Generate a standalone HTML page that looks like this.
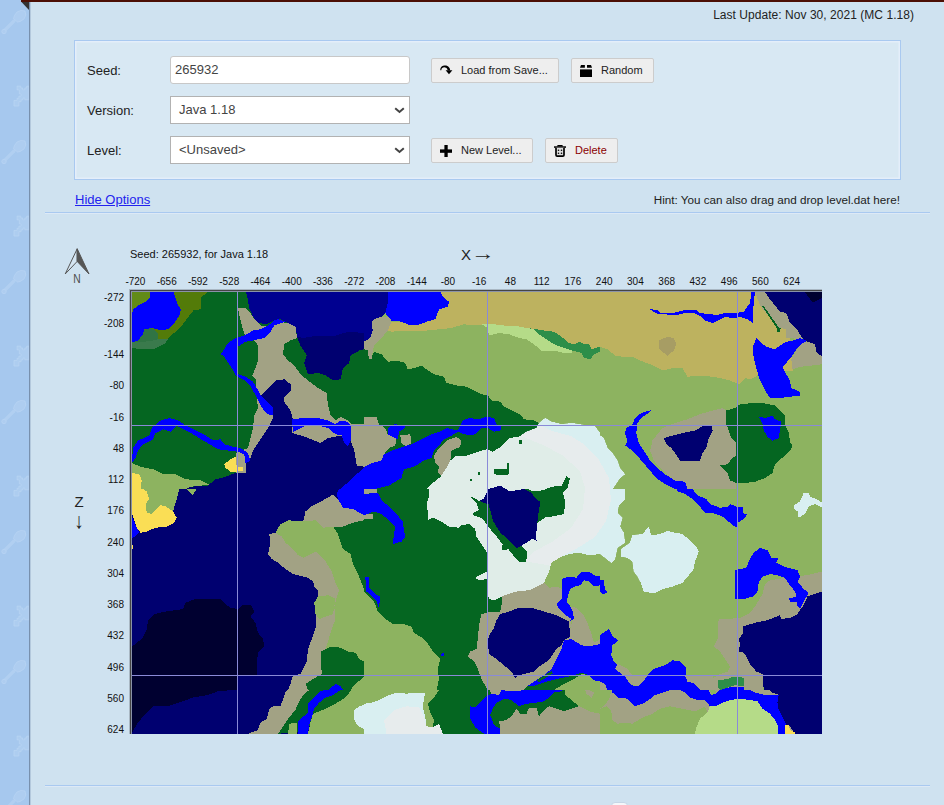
<!DOCTYPE html>
<html><head><meta charset="utf-8"><title>Biome Finder</title>
<style>
*{box-sizing:border-box}
html,body{margin:0;padding:0}
body{width:944px;height:805px;overflow:hidden;position:relative;background:#a6c8ee;font-family:"Liberation Sans",Arial,sans-serif;color:#222}
#side{position:absolute;left:0;top:0;width:29px;height:805px;background:#a6c8ee}
#topbar{position:absolute;left:21px;top:0;width:923px;height:2px;background:#4c0f05}
#main{position:absolute;left:29px;top:2px;width:915px;height:803px;background:#cfe2f0;border-left:1px solid #7890ad;box-shadow:inset 1px 0 0 #b4c9dd}
.abs{position:absolute;white-space:nowrap}
#upd{right:30px;top:8px;font-size:12px;line-height:14px;color:#222;letter-spacing:0.04px}
#opts{position:absolute;left:74px;top:40px;width:827px;height:140px;background:#d8e8f3;border:1px solid #a9c9f0;box-shadow:inset 0 0 0 1.5px #e4eefa}
.lbl{font-size:13px;line-height:16px;color:#222}
.inp{position:absolute;left:170px;width:240px;height:28px;background:#fff;border:1px solid #aaa;border-radius:3px;font-size:13px;line-height:26px;color:#444;padding-left:4px}
.btn{position:absolute;height:25px;background:#eee;border:1px solid #ccc;border-radius:2px;font-size:11px;line-height:22px;color:#222}
.hr{position:absolute;height:2px;background:#a9c9f0;border-bottom:1px solid #dde9f6}
.ax{font-size:10px;line-height:12px;color:#111}
.sel{border-radius:0;border-color:#b2b2b2;padding-left:8px}
.chev{position:absolute;right:4px;top:10px}
.ic{position:absolute;left:6px;top:3px}
</style></head><body>
<div id="side"><svg width="30" height="805" style="position:absolute;left:0;top:0"><g transform="translate(0,10)"><path d="M3.5 21.5 L14 11" stroke="#b1cff1" stroke-width="3.2" stroke-linecap="round" fill="none"/><path d="M14.5 5.5 L17 2 L21 0.5 L25 1 L25.8 5 L24 9 L20 11.5 L17.5 12 L13.5 8.5 Z" fill="#aecdf0" stroke="#b7d3f3" stroke-width="0.8"/><circle cx="4" cy="21.5" r="2.2" fill="#aecdf0" stroke="#b7d3f3" stroke-width="0.8"/></g><g transform="translate(0,140)"><path d="M3.5 21.5 L14 11" stroke="#b1cff1" stroke-width="3.2" stroke-linecap="round" fill="none"/><path d="M14.5 5.5 L17 2 L21 0.5 L25 1 L25.8 5 L24 9 L20 11.5 L17.5 12 L13.5 8.5 Z" fill="#aecdf0" stroke="#b7d3f3" stroke-width="0.8"/><circle cx="4" cy="21.5" r="2.2" fill="#aecdf0" stroke="#b7d3f3" stroke-width="0.8"/></g><g transform="translate(0,270)"><path d="M3.5 21.5 L14 11" stroke="#b1cff1" stroke-width="3.2" stroke-linecap="round" fill="none"/><path d="M14.5 5.5 L17 2 L21 0.5 L25 1 L25.8 5 L24 9 L20 11.5 L17.5 12 L13.5 8.5 Z" fill="#aecdf0" stroke="#b7d3f3" stroke-width="0.8"/><circle cx="4" cy="21.5" r="2.2" fill="#aecdf0" stroke="#b7d3f3" stroke-width="0.8"/></g><g transform="translate(0,400)"><path d="M3.5 21.5 L14 11" stroke="#b1cff1" stroke-width="3.2" stroke-linecap="round" fill="none"/><path d="M14.5 5.5 L17 2 L21 0.5 L25 1 L25.8 5 L24 9 L20 11.5 L17.5 12 L13.5 8.5 Z" fill="#aecdf0" stroke="#b7d3f3" stroke-width="0.8"/><circle cx="4" cy="21.5" r="2.2" fill="#aecdf0" stroke="#b7d3f3" stroke-width="0.8"/></g><g transform="translate(0,530)"><path d="M3.5 21.5 L14 11" stroke="#b1cff1" stroke-width="3.2" stroke-linecap="round" fill="none"/><path d="M14.5 5.5 L17 2 L21 0.5 L25 1 L25.8 5 L24 9 L20 11.5 L17.5 12 L13.5 8.5 Z" fill="#aecdf0" stroke="#b7d3f3" stroke-width="0.8"/><circle cx="4" cy="21.5" r="2.2" fill="#aecdf0" stroke="#b7d3f3" stroke-width="0.8"/></g><g transform="translate(0,660)"><path d="M3.5 21.5 L14 11" stroke="#b1cff1" stroke-width="3.2" stroke-linecap="round" fill="none"/><path d="M14.5 5.5 L17 2 L21 0.5 L25 1 L25.8 5 L24 9 L20 11.5 L17.5 12 L13.5 8.5 Z" fill="#aecdf0" stroke="#b7d3f3" stroke-width="0.8"/><circle cx="4" cy="21.5" r="2.2" fill="#aecdf0" stroke="#b7d3f3" stroke-width="0.8"/></g><g transform="translate(0,790)"><path d="M3.5 21.5 L14 11" stroke="#b1cff1" stroke-width="3.2" stroke-linecap="round" fill="none"/><path d="M14.5 5.5 L17 2 L21 0.5 L25 1 L25.8 5 L24 9 L20 11.5 L17.5 12 L13.5 8.5 Z" fill="#aecdf0" stroke="#b7d3f3" stroke-width="0.8"/><circle cx="4" cy="21.5" r="2.2" fill="#aecdf0" stroke="#b7d3f3" stroke-width="0.8"/></g><g transform="translate(0,86)"><polygon points="17.1,0.1 20.8,0.1 20.8,2.0 22.7,2.0 22.7,3.9 24.8,3.9 24.8,2.0 26.7,2.0 26.7,0.1 28.9,0.1 28.9,13.8 24.8,13.8 24.8,12.0 23.0,12.0 23.0,13.8 21.1,13.8 21.1,15.7 18.9,15.7 18.9,20.0 14.0,20.0 14.0,14.4 17.1,14.4 17.1,12.3 18.9,12.3 18.9,10.1 21.1,10.1 21.1,7.9 19.3,7.9 19.3,3.9 17.1,3.9" fill="#adcdf0" stroke="#b9d4f3" stroke-width="0.8"/></g><g transform="translate(0,216)"><polygon points="17.1,0.1 20.8,0.1 20.8,2.0 22.7,2.0 22.7,3.9 24.8,3.9 24.8,2.0 26.7,2.0 26.7,0.1 28.9,0.1 28.9,13.8 24.8,13.8 24.8,12.0 23.0,12.0 23.0,13.8 21.1,13.8 21.1,15.7 18.9,15.7 18.9,20.0 14.0,20.0 14.0,14.4 17.1,14.4 17.1,12.3 18.9,12.3 18.9,10.1 21.1,10.1 21.1,7.9 19.3,7.9 19.3,3.9 17.1,3.9" fill="#adcdf0" stroke="#b9d4f3" stroke-width="0.8"/></g><g transform="translate(0,346)"><polygon points="17.1,0.1 20.8,0.1 20.8,2.0 22.7,2.0 22.7,3.9 24.8,3.9 24.8,2.0 26.7,2.0 26.7,0.1 28.9,0.1 28.9,13.8 24.8,13.8 24.8,12.0 23.0,12.0 23.0,13.8 21.1,13.8 21.1,15.7 18.9,15.7 18.9,20.0 14.0,20.0 14.0,14.4 17.1,14.4 17.1,12.3 18.9,12.3 18.9,10.1 21.1,10.1 21.1,7.9 19.3,7.9 19.3,3.9 17.1,3.9" fill="#adcdf0" stroke="#b9d4f3" stroke-width="0.8"/></g><g transform="translate(0,476)"><polygon points="17.1,0.1 20.8,0.1 20.8,2.0 22.7,2.0 22.7,3.9 24.8,3.9 24.8,2.0 26.7,2.0 26.7,0.1 28.9,0.1 28.9,13.8 24.8,13.8 24.8,12.0 23.0,12.0 23.0,13.8 21.1,13.8 21.1,15.7 18.9,15.7 18.9,20.0 14.0,20.0 14.0,14.4 17.1,14.4 17.1,12.3 18.9,12.3 18.9,10.1 21.1,10.1 21.1,7.9 19.3,7.9 19.3,3.9 17.1,3.9" fill="#adcdf0" stroke="#b9d4f3" stroke-width="0.8"/></g><g transform="translate(0,606)"><polygon points="17.1,0.1 20.8,0.1 20.8,2.0 22.7,2.0 22.7,3.9 24.8,3.9 24.8,2.0 26.7,2.0 26.7,0.1 28.9,0.1 28.9,13.8 24.8,13.8 24.8,12.0 23.0,12.0 23.0,13.8 21.1,13.8 21.1,15.7 18.9,15.7 18.9,20.0 14.0,20.0 14.0,14.4 17.1,14.4 17.1,12.3 18.9,12.3 18.9,10.1 21.1,10.1 21.1,7.9 19.3,7.9 19.3,3.9 17.1,3.9" fill="#adcdf0" stroke="#b9d4f3" stroke-width="0.8"/></g><g transform="translate(0,736)"><polygon points="17.1,0.1 20.8,0.1 20.8,2.0 22.7,2.0 22.7,3.9 24.8,3.9 24.8,2.0 26.7,2.0 26.7,0.1 28.9,0.1 28.9,13.8 24.8,13.8 24.8,12.0 23.0,12.0 23.0,13.8 21.1,13.8 21.1,15.7 18.9,15.7 18.9,20.0 14.0,20.0 14.0,14.4 17.1,14.4 17.1,12.3 18.9,12.3 18.9,10.1 21.1,10.1 21.1,7.9 19.3,7.9 19.3,3.9 17.1,3.9" fill="#adcdf0" stroke="#b9d4f3" stroke-width="0.8"/></g></svg></div>
<div id="main"></div>
<div id="topbar"></div>
<svg class="abs" style="left:21px;top:2px" width="9" height="9"><polygon points="0.5,0 8,0 8,8" fill="#333"/></svg>
<div class="abs" id="upd">Last Update: Nov 30, 2021 (MC 1.18)</div>
<div id="opts"></div>
<div class="abs lbl" style="left:87px;top:63px">Seed:</div>
<div class="abs lbl" style="left:87px;top:103px">Version:</div>
<div class="abs lbl" style="left:87px;top:143px">Level:</div>
<div class="inp" style="top:56px;border-radius:3px;border-color:#c8c8c8">265932</div>
<div class="inp sel" style="top:96px">Java 1.18<svg class="chev" width="11" height="7" viewBox="0 0 11 7"><path d="M1.2 1.2 L5.5 5 L9.8 1.2" fill="none" stroke="#444" stroke-width="2"/></svg></div>
<div class="inp sel" style="top:136px">&lt;Unsaved&gt;<svg class="chev" width="11" height="7" viewBox="0 0 11 7"><path d="M1.2 1.2 L5.5 5 L9.8 1.2" fill="none" stroke="#444" stroke-width="2"/></svg></div>
<div class="btn" style="left:431px;top:58px;width:128px"><svg class="ic" width="16" height="16" viewBox="0 0 16 16"><path d="M2.3 8.2 C2.2 4.6 4.6 3.4 7 3.4 C10.6 3.4 12.2 6 12.2 8.6 L9.6 8.6 C9.6 6.8 8.8 5.6 6.9 5.4 C5 5.2 3.5 6 3.3 8.2 Z"/><polygon points="7.6,8.2 14.4,8.2 11,12.2"/></svg><span class="abs" style="left:29px">Load from Save...</span></div>
<div class="btn" style="left:571px;top:58px;width:83px"><svg class="ic" width="16" height="16" viewBox="0 0 16 16"><polygon points="3,3 6.9,3 6.9,5.8 2,5.8"/><polygon points="9,3 13,3 14,5.8 9,5.8"/><rect x="2" y="7.4" width="12" height="7.6"/></svg><span class="abs" style="left:29px">Random</span></div>
<div class="btn" style="left:431px;top:138px;width:102px"><svg class="ic" width="16" height="16" viewBox="0 0 16 16"><rect x="2" y="7.4" width="12" height="3.4"/><rect x="6.4" y="3" width="3.3" height="12"/></svg><span class="abs" style="left:29px">New Level...</span></div>
<div class="btn" style="left:545px;top:138px;width:73px"><svg class="ic" width="16" height="16" viewBox="0 0 16 16"><rect x="2" y="4.3" width="12" height="1.5"/><path d="M5 4.5 L5.6 3 H10.4 L11 4.5Z"/><path d="M4 5.8 V13 Q4 14.2 5.2 14.2 H10.8 Q12 14.2 12 13 V5.8" fill="#ddd" stroke="#000" stroke-width="1.7"/><circle cx="6.5" cy="8.3" r="0.8"/><circle cx="9.5" cy="8.3" r="0.8"/><circle cx="6.5" cy="11.2" r="0.8"/><circle cx="9.5" cy="11.2" r="0.8"/></svg><span class="abs" style="left:29px;color:#8b0000">Delete</span></div>
<div class="abs" style="left:75px;top:192px;font-size:13px;line-height:16px;color:#2222ee;text-decoration:underline">Hide Options</div>
<div class="abs" style="right:44px;top:193px;font-size:11.7px;line-height:14px;color:#222">Hint: You can also drag and drop level.dat here!</div>
<div class="hr" style="left:45px;top:212px;width:885px"></div>
<div class="hr" style="left:45px;top:785px;width:885px"></div>
<div class="abs" style="left:611px;top:802px;width:17px;height:8px;background:#f4f7fa;border:1px solid #c5d6e6;border-radius:4px"></div>
<svg class="abs" style="left:62px;top:245px" width="30" height="32" viewBox="0 0 30 32"><polygon points="15.2,3.8 3.2,29 15.2,16.4" fill="#d4e5f2" stroke="#555" stroke-width="1"/><polygon points="15.2,3.8 27,29 15.2,16.4" fill="#555" stroke="#555" stroke-width="1"/></svg>
<div class="abs" style="left:66.5px;top:272.5px;width:20px;text-align:center;font-size:12.5px;line-height:12px;color:#4a4a4a;transform:scaleX(0.82)">N</div>
<div class="abs" style="left:130px;top:248px;font-size:11px;line-height:12px;color:#111">Seed: 265932, for Java 1.18</div>
<div class="abs" style="left:461px;top:244.5px;font-size:15px;line-height:18px;color:#222">X<span style="display:inline-block;font-size:19px;line-height:18px;margin-left:0px;transform:scaleX(1.25);transform-origin:0 50%">→</span></div>
<div class="abs" style="left:69px;top:493px;width:20px;text-align:center;font-size:15px;line-height:18px;color:#222">Z</div>
<div class="abs" style="left:69px;top:512px;width:20px;text-align:center;font-size:19px;line-height:18px;color:#222;transform:scaleY(1.15)">↓</div>
<div class="abs ax" style="left:115.4px;top:276px;width:40px;text-align:center">-720</div><div class="abs ax" style="left:146.7px;top:276px;width:40px;text-align:center">-656</div><div class="abs ax" style="left:177.9px;top:276px;width:40px;text-align:center">-592</div><div class="abs ax" style="left:209.2px;top:276px;width:40px;text-align:center">-528</div><div class="abs ax" style="left:240.4px;top:276px;width:40px;text-align:center">-464</div><div class="abs ax" style="left:271.7px;top:276px;width:40px;text-align:center">-400</div><div class="abs ax" style="left:302.9px;top:276px;width:40px;text-align:center">-336</div><div class="abs ax" style="left:334.2px;top:276px;width:40px;text-align:center">-272</div><div class="abs ax" style="left:365.4px;top:276px;width:40px;text-align:center">-208</div><div class="abs ax" style="left:396.7px;top:276px;width:40px;text-align:center">-144</div><div class="abs ax" style="left:427.9px;top:276px;width:40px;text-align:center">-80</div><div class="abs ax" style="left:459.2px;top:276px;width:40px;text-align:center">-16</div><div class="abs ax" style="left:490.4px;top:276px;width:40px;text-align:center">48</div><div class="abs ax" style="left:521.7px;top:276px;width:40px;text-align:center">112</div><div class="abs ax" style="left:552.9px;top:276px;width:40px;text-align:center">176</div><div class="abs ax" style="left:584.2px;top:276px;width:40px;text-align:center">240</div><div class="abs ax" style="left:615.4px;top:276px;width:40px;text-align:center">304</div><div class="abs ax" style="left:646.7px;top:276px;width:40px;text-align:center">368</div><div class="abs ax" style="left:677.9px;top:276px;width:40px;text-align:center">432</div><div class="abs ax" style="left:709.2px;top:276px;width:40px;text-align:center">496</div><div class="abs ax" style="left:740.4px;top:276px;width:40px;text-align:center">560</div><div class="abs ax" style="left:771.7px;top:276px;width:40px;text-align:center">624</div>
<div class="abs ax" style="left:84px;top:291.5px;width:40px;text-align:right">-272</div><div class="abs ax" style="left:84px;top:317.9px;width:40px;text-align:right">-208</div><div class="abs ax" style="left:84px;top:349.2px;width:40px;text-align:right">-144</div><div class="abs ax" style="left:84px;top:380.4px;width:40px;text-align:right">-80</div><div class="abs ax" style="left:84px;top:411.7px;width:40px;text-align:right">-16</div><div class="abs ax" style="left:84px;top:442.9px;width:40px;text-align:right">48</div><div class="abs ax" style="left:84px;top:474.2px;width:40px;text-align:right">112</div><div class="abs ax" style="left:84px;top:505.4px;width:40px;text-align:right">176</div><div class="abs ax" style="left:84px;top:536.7px;width:40px;text-align:right">240</div><div class="abs ax" style="left:84px;top:567.9px;width:40px;text-align:right">304</div><div class="abs ax" style="left:84px;top:599.2px;width:40px;text-align:right">368</div><div class="abs ax" style="left:84px;top:630.4px;width:40px;text-align:right">432</div><div class="abs ax" style="left:84px;top:661.7px;width:40px;text-align:right">496</div><div class="abs ax" style="left:84px;top:692.9px;width:40px;text-align:right">560</div><div class="abs ax" style="left:84px;top:724.2px;width:40px;text-align:right">624</div>
<div id="map"><svg width="944" height="805" viewBox="0 0 944 805" shape-rendering="crispEdges" style="position:absolute;left:0;top:0">
<defs>
<clipPath id="c0"><rect x="132" y="292" width="232" height="197"/></clipPath>
<clipPath id="c1"><rect x="364" y="292" width="236" height="197"/></clipPath>
<clipPath id="c2"><rect x="600" y="292" width="222" height="197"/></clipPath>
<clipPath id="c3"><rect x="132" y="489" width="232" height="201"/></clipPath>
<clipPath id="c4"><rect x="364" y="489" width="236" height="201"/></clipPath>
<clipPath id="c5"><rect x="600" y="489" width="222" height="201"/></clipPath>
<clipPath id="c6"><rect x="132" y="690" width="232" height="44"/></clipPath>
<clipPath id="c7"><rect x="364" y="690" width="236" height="44"/></clipPath>
<clipPath id="c8"><rect x="600" y="690" width="222" height="44"/></clipPath>
<clipPath id="snow">
<polygon points="426.5,489 432.75,483 439,478 441.5,475.5 446.5,468 450.25,460.5 456.5,455.5 466.5,455.5 474,453 486.5,449.25 492.75,451.75 499,448 504,443 509,438 519,436.75 526.5,431.75 536.5,428 539,423 545.25,418 551.5,421.75 561.5,424.25 571.5,423 584,425 594,425 600,433 600,489"/>
<polygon points="600,435.5 603.75,438 607.5,448 612.5,453 617.5,460.5 620,468 625,474.25 620,478 615,485.5 612.5,489 600,489"/>
<polygon points="429,489 600,489 600,554 589,555.25 579,552.75 569,554 561.5,556.5 551.5,562.75 549,571.5 544,582.75 536.5,586.5 529,590.25 519,591 511.5,592.75 501.5,596.5 494,600.25 489,599 486.5,589 486.5,579 479,580.25 475.25,577.75 481.5,574 486.5,571.5 486.5,551.5 481.5,544 476.5,536.5 475.25,529 469,524 461.5,525.25 459,527.75 449,526.5 439,520.25 432.75,517.75 427.75,520.25 427.75,511.5 426.5,504 429,496.5"/>
<polygon points="600,489 625,489 625,499 618.75,505.25 617.5,512.75 622.5,517.75 620,526.5 623.75,532.75 625,542.75 617.5,547.75 615,559 611.25,562.75 605,557.75 600,554"/>
<polygon points="621.25,549 630,542.75 632.5,535.25 642.5,534 648.75,526.5 651.25,535.25 660,534 667.5,531 675,532.75 682.5,534 690,540.25 696.25,546.5 698.75,551.5 695,561.5 693.75,569 688.75,575.25 682.5,582.75 672.5,586.5 662.5,589 653.75,593.5 643.75,591.5 641.25,584 637.5,576.5 633.75,571.5 632.5,561.5 627.5,557.75 621.25,556.5"/>
<polygon points="793.75,505.25 800,501.5 803.75,492.75 808.75,492.75 810,496.5 818.75,500.25 822,502.75 822,507.75 815,504 808.75,506.5 805,514 798.75,517.75 797.5,511.5 793.75,509"/>
<polygon points="354.25,710 359.25,706.25 364,705 364,728.75 358,726.25 354.25,720"/>
<polygon points="364,703.75 371.5,702.5 379,700 386.5,696.25 396.5,692.5 406.5,693.75 414,692.5 425.25,692.5 424,697.5 422.75,707.5 425.25,717.5 426.5,726.25 432.75,727.5 439,723.75 442.75,733.75 364,733.75"/>
<polygon points="384,720 394,710 406.5,706.25 419,707.5 424,717.5 426.5,726.25 432.75,727.5 439,723.75 442.75,733.75 386.5,733.75"/>
</clipPath>
</defs>
<g clip-path="url(#c0)"><rect x="132" y="292" width="232" height="197" fill="#056621"/><g transform="translate(128,288) scale(0.25)">
</g></g>
<g clip-path="url(#c1)"><rect x="364" y="292" width="236" height="197" fill="#056621"/><g transform="translate(364,288) scale(0.25)">
<polygon fill="#8db360" points="60,16 944,16 944,580 920,548 880,548 830,540 790,545 750,535 725,520 700,540 680,530 640,525 625,505 590,490 560,475 545,455 510,450 495,430 470,425 440,410 410,395 370,390 330,380 320,355 280,345 250,325 230,310 200,320 175,325 165,300 130,290 95,295 70,265 40,255 30,280 20,285 15,250 0,245 0,16"/>
<polygon fill="#bdb25f" points="305,16 944,16 944,235 910,245 900,225 880,225 860,215 840,225 820,220 790,195 760,175 720,170 690,165 650,160 600,150 560,150 520,145 480,145 440,150 400,145 350,160 300,165 250,170 200,172 150,170 110,175 95,170 110,135 150,135 180,148 210,150 250,135 285,125 300,85 335,75 340,55 320,40"/>
<polygon fill="#b5db88" points="470,145 520,145 560,150 600,150 650,160 680,165 700,185 730,205 760,225 800,240 830,245 830,260 800,260 760,250 710,250 680,225 650,205 620,200 580,185 540,180 500,190 495,160"/>
<polygon fill="#2d8e49" points="650,160 690,165 720,170 760,175 790,195 820,220 840,225 860,215 880,225 900,225 910,245 944,235 944,255 920,265 905,285 880,280 870,260 830,250 800,240 760,225 730,205 700,185 680,165"/>
<polygon fill="#a2a284" points="30,140 40,125 70,115 100,118 110,135 95,170 70,200 40,230 35,255 30,285 20,285 15,250 0,245 0,215 25,200 35,170"/>
<polygon fill="#000090" points="0,16 95,16 95,60 85,100 70,115 40,125 30,140 35,170 25,200 0,215"/>
<polygon fill="#0000ff" points="95,16 305,16 320,40 340,55 335,75 300,85 285,125 250,135 210,150 180,148 150,135 110,130 100,118 85,100 95,60"/>
<polygon fill="#a2a284" points="0,515 50,515 60,545 85,560 95,585 130,600 125,630 100,640 80,665 70,690 30,700 0,715"/>
<polygon fill="#a2a284" points="145,590 185,585 190,620 170,635 150,620"/>
<polygon fill="#a2a284" points="300,640 330,610 370,595 390,610 385,635 350,650 345,690 330,720 310,750 295,740 300,715 285,700 280,670"/>
<polygon fill="#0000ff" points="0,715 30,700 70,690 80,665 110,650 140,640 190,625 230,605 270,585 300,575 330,560 370,570 380,560 395,530 420,520 460,525 490,515 520,520 530,545 550,555 545,570 520,575 495,560 470,560 450,580 430,590 400,585 375,575 350,590 320,605 300,630 280,650 270,680 240,690 200,715 160,725 150,760 100,790 60,800 40,804 0,804"/>
<polygon fill="#0000ff" points="95,560 120,545 160,548 165,560 140,575 135,605 95,585"/>
<polygon fill="#e0ede8" points="250,804 275,780 300,760 310,750 330,720 345,690 370,670 410,670 440,660 490,645 515,655 540,640 560,620 580,600 620,595 650,575 690,560 700,540 725,520 750,535 790,545 830,540 880,548 920,548 944,580 944,804"/>
</g></g>
<g clip-path="url(#c2)"><rect x="600" y="292" width="222" height="197" fill="#8db360"/><g transform="translate(600,288) scale(0.25)">
<polygon fill="#bdb25f" points="0,16 660,16 700,100 745,165 760,200 770,280 770,330 730,330 630,350 600,365 580,360 555,385 520,370 480,360 450,355 400,350 350,355 330,320 290,320 250,330 200,305 160,290 130,275 90,275 60,270 30,245 0,235"/>
<polygon fill="#a79d64" points="235,210 270,195 295,200 305,225 295,250 270,270 250,255 235,240"/>
<polygon fill="#0000ff" points="200,85 230,88 240,100 290,100 340,88 385,88 400,100 440,105 470,108 500,100 545,100 575,95 600,60 605,16 620,16 615,60 612,100 612,140 590,125 560,115 540,122 500,115 470,130 450,140 420,130 400,112 375,100 340,100 300,110 260,105 235,105 215,95"/>
<polygon fill="#a2a284" points="620,16 660,16 680,45 700,70 720,95 745,100 760,140 790,170 810,200 800,215 770,200 745,200 745,165 720,160 700,145 660,95 640,70"/>
<polygon fill="#056621" points="648,72 655,72 715,158 708,162"/>
<polygon fill="#056621" points="708,160 722,160 722,175 708,175"/>
<polygon fill="#bdb25f" points="720,165 742,165 742,185 720,185"/>
<polygon fill="#000070" points="660,16 888,16 888,275 865,255 860,225 830,215 810,200 790,170 760,140 745,100 720,95 700,70 680,45"/>
<polygon fill="#000030" points="820,16 888,16 888,40 850,58"/>
<polygon fill="#a2a284" points="722,112 735,112 735,128 722,128"/>
<polygon fill="#a2a284" points="810,215 830,215 860,225 865,255 888,275 888,305 850,310 800,315 770,325 765,285 780,260 795,235"/>
<polygon fill="#0000ff" points="625,200 640,215 665,235 700,245 720,230 745,215 770,210 800,200 830,212 810,220 790,240 770,270 745,300 730,315 745,345 760,370 765,400 800,415 800,430 760,435 720,440 680,440 660,410 640,370 625,320 615,280 610,240"/>
<polygon fill="#056621" points="505,490 540,480 560,465 610,460 660,462 700,470 720,490 740,510 740,550 755,580 760,615 770,630 760,650 740,670 715,690 700,705 690,740 660,760 620,775 580,780 545,780 520,770 510,740 490,720 480,710 510,705 530,680 545,670 545,620 525,600 515,570 505,545"/>
<polygon fill="#0000ff" points="635,515 660,520 690,510 700,525 725,535 720,570 715,600 690,610 670,595 655,570 650,545"/>
<polygon fill="#a2a284" points="210,610 250,560 300,540 350,525 400,505 450,490 490,480 505,490 505,545 515,570 525,600 545,620 545,670 530,680 510,705 480,710 490,720 510,740 520,770 545,780 545,804 330,804 300,770 270,750 240,720 215,690 200,650"/>
<polygon fill="#000070" points="255,600 290,590 330,580 380,570 415,550 445,550 450,570 435,600 425,640 410,660 400,690 360,692 320,690 300,660 285,640 265,625"/>
<polygon fill="#0000ff" points="205,488 195,500 170,515 150,540 145,580 155,620 175,650 200,690 230,720 260,745 300,770 340,775 350,804 300,804 260,785 225,760 195,725 165,690 140,660 115,640 100,630 110,615 100,580 105,560 130,545 140,520 165,500"/>
<polygon fill="#e0ede8" points="0,590 15,600 30,640 50,660 70,690 80,720 100,745 80,760 60,790 50,804 0,804"/>
</g></g>
<g clip-path="url(#c3)"><rect x="132" y="489" width="232" height="201" fill="#000070"/><g transform="translate(128,489) scale(0.25)">
</g></g>
<g clip-path="url(#c4)"><rect x="364" y="489" width="236" height="201" fill="#056621"/><g transform="translate(364,489) scale(0.25)">
<polygon fill="#a2a284" points="0,0 50,0 50,15 0,20"/>
<polygon fill="#a2a284" points="0,100 35,100 35,120 0,120"/>
<polygon fill="#0000ff" points="0,20 55,15 70,45 100,70 130,100 155,130 160,165 165,190 150,210 115,220 120,180 125,150 100,125 70,100 40,90 0,105"/>
<polygon fill="#0000ff" points="5,350 20,350 20,395 45,420 65,430 60,475 50,450 30,430 10,410"/>
<polygon fill="#0000ff" points="310,658 322,655 318,668 308,668"/>
<polygon fill="#8db360" points="0,410 15,425 40,450 55,490 80,515 115,540 150,538 190,550 200,575 240,600 260,625 280,655 305,680 295,720 300,760 290,804 0,804"/>
<polygon fill="#e0ede8" points="260,0 944,0 944,260 900,265 860,255 820,260 790,270 750,295 740,330 720,375 690,390 660,405 620,408 590,415 550,430 520,445 500,440 490,400 490,360 460,365 445,355 470,340 490,330 490,250 470,220 450,190 445,160 420,140 390,145 380,155 340,150 300,125 275,115 255,125 255,90 250,60 260,30"/>
</g></g>
<g clip-path="url(#c5)"><rect x="600" y="489" width="222" height="201" fill="#8db360"/><g transform="translate(600,489) scale(0.25)">
<polygon fill="#e0ede8" points="0,0 100,0 100,40 75,65 70,95 90,115 80,150 95,175 100,215 70,235 60,280 45,295 20,275 0,260"/>
<polygon fill="#d9eff1" points="85,240 120,215 130,185 170,180 195,150 205,185 240,180 270,168 300,175 330,180 360,205 385,230 395,250 380,290 375,320 355,345 330,375 290,390 250,400 215,418 175,410 165,380 150,350 135,330 130,290 110,275 85,270"/>
<polygon fill="#d9eff1" points="775,65 800,50 815,15 835,15 840,30 875,45 888,55 888,75 860,60 835,70 820,100 795,115 790,90 775,80"/>
</g></g>
<g clip-path="url(#c6)"><rect x="132" y="690" width="232" height="44" fill="#000070"/><g transform="translate(128,660) scale(0.25)">
<polygon fill="#000030" points="16,0 515,0 510,40 440,60 430,90 420,120 360,125 320,140 260,150 220,165 160,185 100,185 70,215 40,250 16,290"/>
<polygon fill="#a2a284" points="720,0 780,0 770,50 720,90 725,120 700,140 680,175 670,200 640,235 600,295 480,295 520,280 530,250 555,235 565,195 580,185 610,185 630,130 650,100 660,50 695,40"/>
<polygon fill="#056621" points="780,0 944,0 944,66 905,105 870,150 830,175 790,195 740,215 730,250 720,285 600,295 640,235 670,200 680,175 700,140 725,120 720,90 770,50"/>
<polygon fill="#8db360" points="944,66 944,295 720,295 730,250 740,215 790,195 830,175 870,150 905,105"/>
<polygon fill="#8db360" points="645,255 675,250 675,295 640,295"/>
<polygon fill="#0000ff" points="680,245 720,210 720,175 745,150 770,125 800,115 835,95 855,100 850,120 820,140 790,150 765,170 745,195 735,230 725,260 720,295 680,295"/>
<polygon fill="#d9eff1" points="905,200 925,185 944,180 944,275 920,265 905,240"/>
</g></g>
<g clip-path="url(#c7)"><rect x="364" y="690" width="236" height="44" fill="#056621"/><g transform="translate(364,660) scale(0.25)">
<polygon fill="#8db360" points="0,0 305,0 290,40 295,80 300,120 280,150 255,175 265,210 280,240 275,270 250,265 245,230 235,190 240,150 245,130 200,130 170,135 130,130 90,145 60,160 30,170 0,175"/>
<polygon fill="#d9eff1" points="0,175 30,170 60,160 90,145 130,130 170,135 200,130 245,130 240,150 235,190 245,230 250,265 275,270 300,255 315,295 0,295"/>
<polygon fill="#e7eced" points="80,240 120,200 170,185 220,190 240,230 250,265 275,270 300,255 315,295 90,295"/>
</g></g>
<g clip-path="url(#c8)"><rect x="600" y="690" width="222" height="44" fill="#a2a284"/><g transform="translate(600,660) scale(0.25)">
</g></g>
<g clip-path="url(#snow)">
<polygon fill="#d9eff1" points="538,424 552,431 571,436 585,445 599,460 609,478 611,500 606,521 595,537 576,549 562,556 552,566 552,585 640,585 640,405 538,405"/>
<polygon fill="#e7eced" points="538,424 552,431 571,436 585,445 599,460 609,478 611,500 606,521 595,537 576,549 562,556 552,566 524,561 533,552 552,542 571,528 583,509 585,488 580,471 562,455 543,445 521,436 515,428"/>
</g>
<g clip-path="url(#c0)"><g transform="translate(128,288) scale(0.25)">
<polygon fill="#628b17" points="16,16 88,16 88,40 70,55 40,70 22,85 16,100"/>
<polygon fill="#537b09" points="182,16 318,16 290,40 290,85 262,90 245,110 215,150 190,175 165,195 160,205 120,205 120,180 95,160 130,168 160,165 185,140 205,110 212,85 200,70 190,40"/>
<polygon fill="#307444" points="65,165 95,160 120,180 120,205 160,205 150,220 100,245 55,245 16,240 16,218 40,210 60,185"/>
<polygon fill="#3a7a4c" points="16,218 60,215 120,205 160,205 150,220 100,245 55,245 16,240"/>
<polygon fill="#307444" points="65,165 95,160 120,180 120,205 90,212 60,215 60,185"/>
<polygon fill="#0000ff" points="88,16 182,16 190,40 200,70 212,85 205,110 185,140 160,165 130,168 95,160 65,165 60,185 40,210 16,218 16,100 22,85 40,70 70,55 88,40"/>
<polygon fill="#a2a284" points="440,78 470,78 490,100 505,125 530,150 560,150 600,135 640,140 670,155 676,200 650,210 625,225 620,265 640,290 665,310 690,345 720,370 760,400 795,420 800,470 810,510 830,530 850,515 880,530 895,545 944,545 944,715 915,710 905,650 880,635 800,620 770,620 720,600 655,580 650,490 625,455 625,435 650,410 650,385 625,365 590,370 565,395 530,430 560,460 580,480 580,520 560,560 540,590 520,620 500,650 490,680 470,690 470,740 430,740 430,660 480,640 490,600 500,560 505,510 520,480 515,440 510,365 498,350 510,320 520,290 520,230 505,210 470,195 455,150 445,110"/>
<polygon fill="#000090" points="472,16 944,16 944,180 880,175 830,190 760,190 700,200 676,195 670,155 640,140 610,125 585,130 555,145 520,140 500,115 485,80 480,50"/>
<polygon fill="#000070" points="676,195 700,200 760,190 830,190 880,175 944,180 944,245 925,250 890,270 885,300 860,320 850,365 820,370 790,350 760,340 720,345 705,300 715,270 690,230"/>
<polygon fill="#000070" points="590,370 625,365 650,385 650,410 625,435 625,455 650,490 660,525 655,560 655,580 690,590 720,600 770,620 800,600 855,590 865,620 880,635 890,610 905,650 915,710 944,715 944,804 230,804 250,795 320,790 350,765 390,755 430,740 470,740 470,690 490,680 500,650 520,620 540,590 560,560 580,520 580,480 560,460 530,430 565,395"/>
<polygon fill="#0000ff" points="600,125 630,135 585,150 570,175 545,200 500,210 470,215 440,235 440,300 440,345 470,355 500,375 515,400 530,430 560,460 580,480 580,510 560,505 540,485 520,450 505,420 485,385 460,365 435,355 415,320 395,290 380,270 370,265 385,245 400,220 430,200 465,190 500,170 530,165 560,150 585,130"/>
<polygon fill="#0000ff" points="655,525 700,520 760,520 800,530 830,545 850,530 875,535 890,550 890,610 880,635 865,620 855,590 830,585 800,560 760,550 720,548 690,560 660,575"/>
<polygon fill="#0000ff" points="16,690 20,640 40,610 85,590 95,560 130,530 165,520 200,530 230,550 270,570 310,590 340,610 370,605 385,625 420,635 450,640 480,660 490,690 470,700 465,665 440,655 400,650 360,645 335,630 300,610 260,585 220,565 195,550 170,575 140,565 110,580 100,605 60,625 40,650 30,680 16,700"/>
<polygon fill="#0000ff" points="944,718 944,804 850,804"/>
<polygon fill="#8db360" points="16,700 50,715 100,725 140,745 190,745 230,765 290,770 325,787 250,795 230,804 50,804 55,770 45,745 16,740"/>
<polygon fill="#fade55" points="385,705 410,685 430,675 435,715 460,715 460,730 415,738 390,720"/>
<polygon fill="#fade55" points="16,740 45,745 55,770 50,804 16,804"/>
</g></g>
<g clip-path="url(#c1)"><g transform="translate(364,288) scale(0.25)">
<polygon fill="#056621" points="520,725 570,725 570,700 580,700 580,745 550,750 520,745"/>
<polygon fill="#056621" points="455,737 465,737 465,747 455,747"/>
<polygon fill="#056621" points="423,763 433,763 433,773 423,773"/>
<polygon fill="#056621" points="620,608 630,608 630,622 620,622"/>
</g></g>
<g clip-path="url(#c3)"><g transform="translate(128,489) scale(0.25)">
<polygon fill="#000030" points="16,630 55,600 75,560 80,525 105,500 150,490 220,480 230,455 270,440 370,438 390,460 410,475 440,480 460,462 490,462 505,490 490,510 510,535 520,575 540,600 545,630 520,655 515,700 515,745 440,745 440,804 16,804"/>
<polygon fill="#8db360" points="55,0 205,0 195,40 185,70 180,90 150,70 130,65 95,100 75,95 70,60 85,40 75,10"/>
<polygon fill="#8db360" points="235,0 275,0 258,25"/>
<polygon fill="#fade55" points="16,0 60,0 75,10 85,40 70,60 75,95 95,100 130,65 150,70 180,90 195,115 185,135 155,150 110,155 75,170 50,175 35,155 20,110 16,100"/>
<polygon fill="#0000ff" points="16,110 35,155 45,175 20,195 16,200"/>
<polygon fill="#fade55" points="16,225 21,225 21,240 16,240"/>
<polygon fill="#a2a284" points="820,22 840,40 860,75 900,80 944,105 944,160 850,160 850,420 830,520 800,640 780,740 720,804 640,804 650,780 660,745 690,740 700,720 715,690 720,640 735,600 750,555 750,500 745,455 760,440 760,405 745,390 740,370 720,355 660,340 630,320 600,295 575,280 560,260 570,215 565,180 590,175 610,140 640,125 700,130 710,90 740,65 780,45"/>
<polygon fill="#8db360" points="640,125 700,130 750,125 780,155 820,150 840,180 860,240 890,260 900,300 920,340 944,400 944,712 920,690 910,655 880,650 850,635 810,630 790,640 800,610 815,560 830,520 825,470 835,430 845,405 830,375 815,330 790,290 750,250 730,260 700,275 680,265 660,240 630,215 615,190 590,175 610,140"/>
<polygon fill="#8db360" points="745,455 760,430 800,425 830,440 825,470 820,500 790,510 765,520 750,500"/>
<polygon fill="#056621" points="820,150 860,150 900,135 944,125 944,400 920,340 900,300 890,260 860,240 840,180"/>
<polygon fill="#056621" points="770,650 790,640 810,630 850,635 880,650 910,655 925,680 944,690 944,750 905,785 890,804 720,804 710,780 740,760 775,740"/>
<polygon fill="#8db360" points="944,750 944,804 890,804 905,785"/>
<polygon fill="#0000ff" points="800,804 830,780 850,790 860,804"/>
<polygon fill="#0000ff" points="845,0 944,0 944,105 900,80 860,75 840,40 835,15"/>
</g></g>
<g clip-path="url(#c4)"><g transform="translate(364,489) scale(0.25)">
<polygon fill="#8db360" points="750,295 790,270 820,260 860,255 900,265 944,260 944,600 920,615 880,620 860,610 830,600 825,560 830,520 800,500 780,480 770,460 790,440 790,400 770,390 740,395 720,375 740,330"/>
<polygon fill="#a2a284" points="550,430 590,415 620,408 660,405 690,390 720,375 740,395 770,390 790,400 790,440 770,460 780,480 800,500 830,520 825,560 830,600 860,610 880,620 920,615 944,600 944,620 900,630 870,625 830,600 800,605 790,640 770,680 750,720 720,745 680,770 650,790 640,804 495,804 470,760 455,720 440,690 415,670 425,650 450,640 455,600 460,545 470,500 510,490 545,490 550,465"/>
<polygon fill="#a2a284" points="825,470 850,475 875,500 895,540 910,580 920,615 880,620 860,610 830,600 825,560 835,520"/>
<polygon fill="#000070" points="545,500 580,490 620,475 680,478 720,490 770,505 800,520 820,530 825,590 800,605 790,625 770,640 750,670 730,690 700,710 680,730 620,745 605,755 590,730 560,705 530,680 500,660 495,610 500,585 520,555 530,525"/>
<polygon fill="#0000ff" points="790,360 820,350 850,355 870,330 900,330 920,345 944,350 944,385 920,390 900,370 880,365 865,385 845,390 825,400 815,430 810,450 825,470 835,490 840,520 820,530 830,520 800,500 780,480 770,460 790,440 790,400"/>
<polygon fill="#0000ff" points="944,620 900,630 870,625 830,600 800,605 790,640 770,680 750,720 720,745 680,770 650,790 690,785 730,770 770,760 820,750 870,735 900,745 920,765 944,770"/>
<polygon fill="#8db360" points="760,804 800,780 840,760 870,740 900,745 920,765 944,770 944,804"/>
<polygon fill="#056621" points="690,765 750,728 755,738 700,772"/>
</g></g>
<g clip-path="url(#c5)"><g transform="translate(600,489) scale(0.25)">
<polygon fill="#0000ff" points="305,0 370,0 390,25 425,40 440,60 480,75 510,70 520,60 545,70 570,70 575,100 590,100 575,120 550,135 545,155 520,135 490,110 450,95 420,95 395,65 370,40 340,20 310,10"/>
<polygon fill="#a2a284" points="888,330 850,340 820,345 800,350 740,355 680,365 660,380 650,420 620,470 600,495 560,515 510,520 475,520 470,560 470,600 455,630 480,650 500,680 520,710 510,730 470,745 450,760 450,804 650,804 650,740 888,740"/>
<polygon fill="#0000ff" points="540,325 585,315 600,280 615,255 640,235 670,245 685,275 715,275 705,295 735,310 790,325 800,350 790,370 815,400 835,415 815,450 800,480 790,470 785,450 760,450 755,438 785,430 780,410 760,385 740,355 710,345 680,340 650,350 635,375 630,410 610,430 575,440 540,440"/>
<polygon fill="#a2a284" points="785,490 805,485 805,500 785,500"/>
<polygon fill="#000070" points="570,550 620,535 670,525 720,505 725,520 760,515 790,500 810,470 830,430 888,410 888,804 655,804 650,740 625,730 600,700 585,670 570,650 555,650 560,620 555,600 570,580"/>
<polygon fill="#0000ff" points="0,585 35,560 50,590 75,605 50,625 45,665 55,690 80,715 100,735 120,760 125,785 150,790 190,745 215,720 260,705 290,685 320,690 345,715 345,745 350,770 380,780 400,804 0,804"/>
<polygon fill="#a2a284" points="70,700 110,720 130,745 190,745 180,760 150,790 120,780 100,750 60,720"/>
<polygon fill="#a2a284" points="340,745 450,745 450,804 400,804 380,780 350,770"/>
<polygon fill="#a2a284" points="0,770 20,780 30,804 0,804"/>
<polygon fill="#0000ff" points="0,365 15,365 20,400 30,415 10,420 0,410"/>
<polygon fill="#2d8e49" points="470,765 510,760 530,750 575,755 575,790 540,785 510,795 480,804 470,790"/>
<polygon fill="#0000ff" points="480,804 510,795 540,790 575,790 575,804"/>
</g></g>
<g clip-path="url(#c7)"><g transform="translate(364,660) scale(0.25)">
<polygon fill="#a2a284" points="455,0 545,0 570,25 600,50 620,45 650,35 680,40 700,20 720,0 770,0 750,40 720,60 690,75 660,90 650,110 620,125 580,125 550,120 540,140 510,135 490,100 480,70 460,50"/>
<polygon fill="#000070" points="545,0 700,0 690,20 680,40 650,35 620,45 600,65 585,40 565,25"/>
<polygon fill="#0000ff" points="770,0 944,0 944,60 900,65 880,50 850,60 820,75 800,100 790,125 760,130 740,150 720,165 690,170 650,175 620,185 590,160 560,155 530,170 515,195 505,220 520,260 545,275 545,295 480,295 445,270 425,235 425,185 445,190 470,165 490,145 510,135 540,140 550,120 580,125 620,125 650,110 660,90 690,75 720,60 750,40"/>
<polygon fill="#a2a284" points="545,295 545,275 540,245 570,240 590,225 610,195 625,215 650,215 660,190 690,190 700,225 720,200 740,185 770,195 800,205 830,195 860,185 900,205 944,215 944,295"/>
<polygon fill="#8db360" points="944,60 900,65 880,50 850,60 820,75 800,100 805,140 830,160 860,185 900,205 944,215"/>
<polygon fill="#a2a284" points="880,110 920,130 910,150 890,135"/>
</g></g>
<g clip-path="url(#c8)"><g transform="translate(600,660) scale(0.25)">
<polygon fill="#8db360" points="50,0 280,0 260,20 220,35 190,50 150,60 110,50 90,30 60,15"/>
<polygon fill="#8db360" points="400,0 520,0 530,30 545,60 520,60 500,65 460,65 455,100 465,135 445,140 435,100 440,60 420,30"/>
<polygon fill="#8db360" points="0,80 30,90 45,120 40,150 20,180 0,195"/>
<polygon fill="#8db360" points="0,195 25,185 45,205 50,240 70,255 90,250 130,255 170,230 210,215 240,195 280,185 330,195 380,205 420,185 430,210 400,235 385,270 380,295 0,295"/>
<polygon fill="#b5db88" points="380,295 385,270 400,235 430,210 440,185 465,185 490,170 520,160 560,155 600,160 630,165 650,195 680,215 700,240 710,260 710,295"/>
<polygon fill="#0000ff" points="0,0 50,0 60,15 90,30 110,50 150,60 190,50 220,35 260,20 280,0 310,0 340,30 345,50 350,75 370,85 400,100 430,115 445,140 465,135 480,115 510,105 545,110 580,110 620,130 660,140 715,140 710,170 715,200 730,230 745,260 745,295 710,295 710,260 700,240 680,215 650,195 630,165 600,160 560,155 520,160 490,170 465,185 440,185 420,160 390,160 360,150 340,130 310,115 280,120 250,130 220,140 195,160 170,175 140,185 120,165 100,150 70,150 50,130 40,100 20,85 0,80"/>
<polygon fill="#2d8e49" points="470,85 520,80 530,70 575,70 575,110 545,110 510,105 480,115 470,105"/>
<polygon fill="#000070" points="600,0 888,0 888,295 780,295 760,265 745,260 730,230 715,200 710,170 715,140 690,130 670,115 650,100 650,55 625,40 605,20"/>
<polygon fill="#fade55" points="740,260 755,262 760,280 780,290 780,295 740,295"/>
</g></g>
<polygon fill="#056621" points="468.4,492.6 470.8,496.2 479.0,500.9 487.3,497.3 488.5,504.4 493.2,521.0 500.3,532.8 507.3,538.7 516.8,548.1 521.5,545.7 527.4,551.6 526.2,562.3 519.2,562.3 513.2,555.2 508.5,549.3 501.4,550.5 502.6,544.6 495.5,535.1 487.3,525.7 482.6,518.6 473.1,515.1 473.1,512.7 479.0,510.3 476.7,503.2 471.9,498.5"/>
<polygon fill="#056621" points="523.9,489.1 531.0,492.6 535.7,498.5 540.4,502.1 538.0,516.2 536.9,523.3 545.1,517.4 554.6,516.2 564.0,513.9 565.2,502.1 562.8,492.6 567.5,487.9 569.9,478.5 566.4,476.1 561.6,485.5 552.2,486.7 542.8,490.3 533.3,491.4 528.6,489.1"/>
<polygon fill="#000070" points="488.5,489.1 500.3,485.5 509.7,491.4 523.9,489.1 531.0,492.6 535.7,498.5 540.4,502.1 538.0,516.2 536.9,528.0 535.7,537.5 536.9,541.0 532.1,538.7 527.4,542.2 521.5,545.7 516.8,548.1 507.3,538.7 500.3,532.8 493.2,521.0 488.5,504.4 479.0,500.9 483.7,498.5"/>
<rect x="237" y="292" width="1" height="442" fill="#8a8ad8"/>
<rect x="487" y="292" width="1" height="442" fill="#8a8ad8"/>
<rect x="737" y="292" width="1" height="442" fill="#8a8ad8"/>
<rect x="132" y="425" width="690" height="1" fill="#8a8ad8"/>
<rect x="132" y="675" width="690" height="1" fill="#8a8ad8"/>
<rect x="129" y="289" width="693" height="1" fill="#a9b7c3"/>
<rect x="129" y="289" width="1" height="445" fill="#a9b7c3"/>
<rect x="130" y="290" width="692" height="1" fill="#454545"/>
<rect x="130" y="290" width="1" height="444" fill="#454545"/>
<rect x="131" y="291" width="691" height="1" fill="#8a92a8"/>
<rect x="131" y="291" width="1" height="443" fill="#8a92a8"/>
</svg></div><!--endmap-->
</body></html>
